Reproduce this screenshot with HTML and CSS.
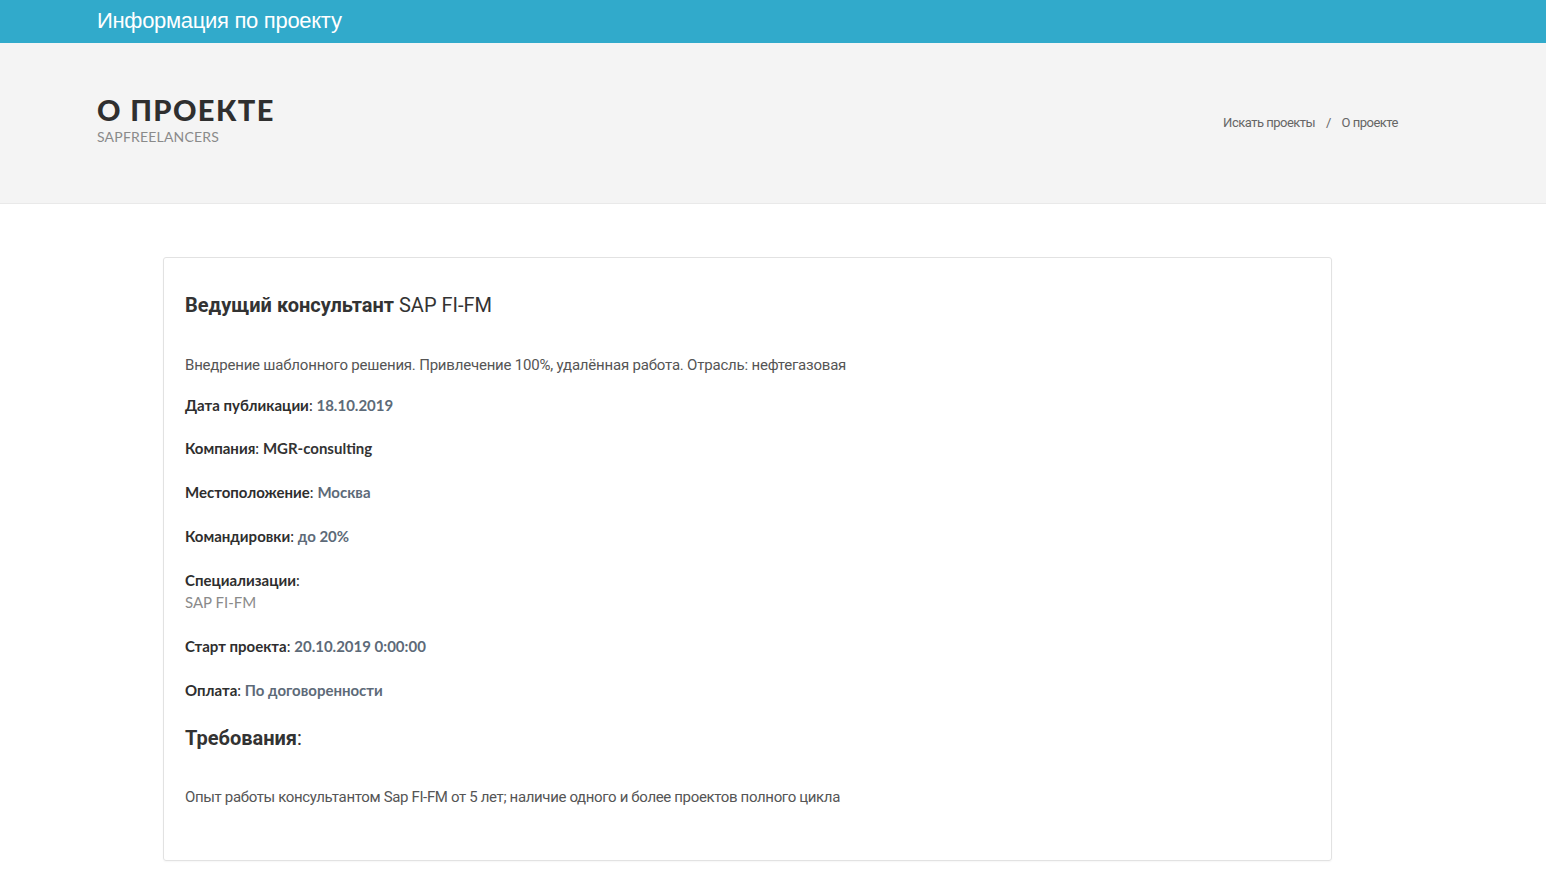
FILE: index.html
```html
<!DOCTYPE html>
<html lang="ru">
<head>
<meta charset="utf-8">
<title>Информация по проекту</title>
<link rel="stylesheet" href="styles.css">
</head>
<body>
<header class="topbar">
  <div class="topbar-title">Информация по проекту</div>
</header>
<section class="page-head">
  <div class="page-head-left">
    <h1 class="page-title">О ПРОЕКТЕ</h1>
    <div class="page-sub">SAPFREELANCERS</div>
  </div>
  <nav class="crumbs">
    <a class="crumb">Искать проекты</a>
    <span class="crumb-sep">/</span>
    <span class="crumb">О проекте</span>
  </nav>
</section>
<main class="content">
  <article class="card">
    <h2 class="job-title"><b>Ведущий консультант</b> SAP FI-FM</h2>
    <p class="desc">Внедрение шаблонного решения. Привлечение 100%, удалённая работа. Отрасль: нефтегазовая</p>
    <div class="row"><span class="label">Дата публикации</span>: <span class="value">18.10.2019</span></div>
    <div class="row"><span class="label">Компания</span>: <span class="value dark">MGR-consulting</span></div>
    <div class="row"><span class="label">Местоположение</span>: <span class="value">Москва</span></div>
    <div class="row"><span class="label">Командировки</span>: <span class="value">до 20%</span></div>
    <div class="row"><span class="label">Специализации</span>:<div class="spec">SAP FI-FM</div></div>
    <div class="row"><span class="label">Старт проекта</span>: <span class="value">20.10.2019 0:00:00</span></div>
    <div class="row"><span class="label">Оплата</span>: <span class="value">По договоренности</span></div>
    <h3 class="req-title"><b>Требования</b>:</h3>
    <p class="req">Опыт работы консультантом Sap FI-FM от 5 лет; наличие одного и более проектов полного цикла</p>
  </article>
</main>
</body>
</html>
```
FILE: styles.css
```css
* { box-sizing: border-box; }
html, body { margin: 0; padding: 0; background: #fff; }
body { font-family: "Open Sans", "Liberation Sans", sans-serif; color: #333; }

.topbar {
  background: #31aacb;
  height: 43px;
  padding-left: 97px;
  display: flex;
  align-items: center;
}
.topbar-title {
  color: #fff;
  font-family: "Liberation Sans", Arial, sans-serif;
  font-size: 22px;
  letter-spacing: -0.3px;
  position: relative;
  top: -1px;
}

.page-head {
  background: #f4f4f4;
  border-bottom: 1px solid #e9e9e9;
  height: 161px;
  padding: 0 148px 0 97px;
  display: flex;
  align-items: center;
  justify-content: space-between;
}
.page-head-left { padding-bottom: 6px; }
.page-title {
  margin: 0;
  font-family: "Lato", sans-serif;
  font-weight: 900;
  font-size: 29px;
  letter-spacing: 1.4px;
  line-height: 30px;
  color: #2f2f2f;
}
.page-sub {
  font-family: "Lato", sans-serif;
  font-size: 14px;
  color: #8a8a8a;
  letter-spacing: 0.2px;
  margin-top: 3px;
}
.crumbs {
  font-family: "Roboto", sans-serif;
  font-size: 13px;
  color: #666;
  letter-spacing: -0.5px;
  padding-bottom: 1px;
}
.crumb { color: #666; text-decoration: none; }
.crumb-sep { margin: 0 8px; }

.content { padding: 53px 214px 30px 163px; }
.card {
  border: 1px solid #e2e2e2;
  border-radius: 3px;
  box-shadow: 0 1px 2px rgba(0,0,0,0.04);
  padding: 34px 22px 52px 21px;
}
.job-title {
  margin: 0;
  font-family: "Roboto", sans-serif;
  font-weight: 400;
  font-size: 20px;
  color: #333;
  line-height: 26px;
}
.job-title b { font-weight: 700; }
.desc {
  margin: 36px 0 0;
  font-family: "Roboto", sans-serif;
  font-size: 15px;
  letter-spacing: -0.2px;
  color: #555;
  line-height: 22px;
}
.row {
  font-family: "Lato", sans-serif;
  font-size: 15px;
  line-height: 22px;
  color: #333;
  margin-top: 22px;
}
.desc + .row { margin-top: 18px; }
.desc + .row + .row { margin-top: 21px; }
.label { font-weight: 700; color: #2e2e2e; }
.value { font-weight: 700; color: #5d6a78; }
.value.dark { color: #333; }
.spec { color: #8a8a8a; font-weight: 400; }
.req-title {
  margin: 23px 0 0;
  font-family: "Roboto", sans-serif;
  font-weight: 400;
  font-size: 20px;
  line-height: 28px;
  color: #333;
}
.req-title b { font-weight: 700; }
.req {
  margin: 34px 0 0;
  font-family: "Roboto", sans-serif;
  font-size: 15px;
  letter-spacing: -0.35px;
  color: #555;
  line-height: 22px;
}
```
